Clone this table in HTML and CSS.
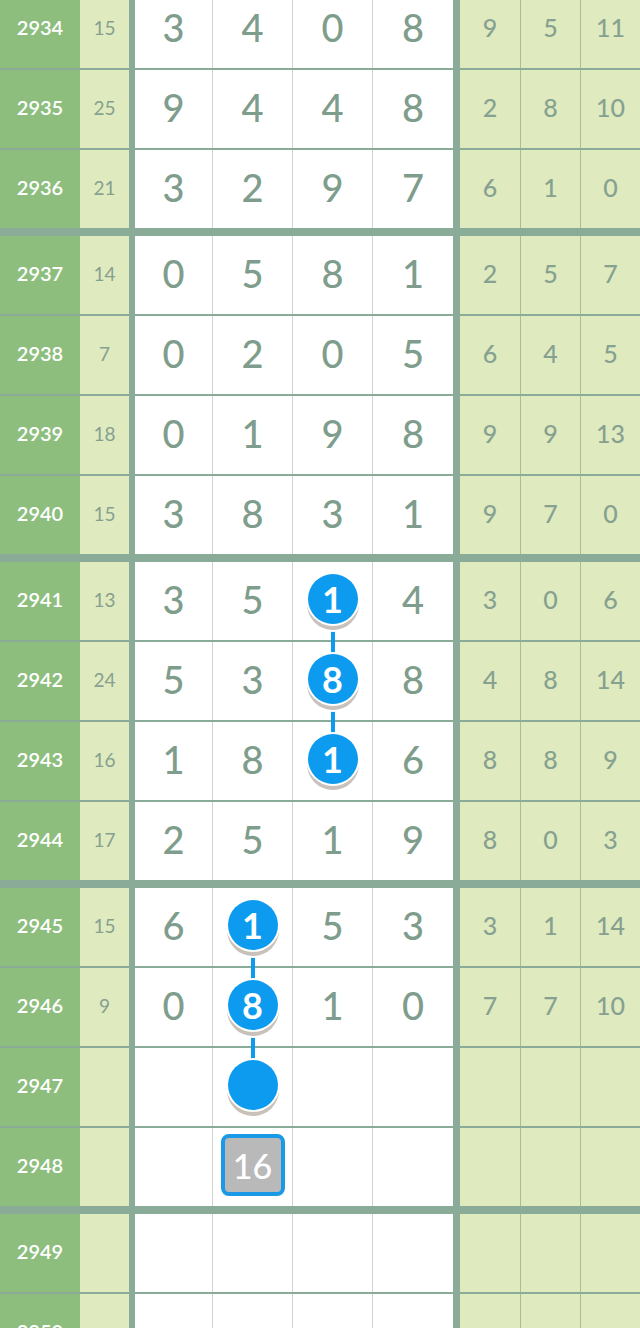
FILE: index.html
```html
<!DOCTYPE html>
<html lang="zh">
<head>
  <meta charset="UTF-8" />
  <meta name="viewport" content="width=device-width, initial-scale=1.0"/>
  <title>走势图</title>
  <link rel="stylesheet" href="styles.css">
</head>
<body>
  <div class="chart">
    <div class="row">
      <div class="no">2934</div><div class="sum">15</div>
      <div class="d first">3</div><div class="d">4</div><div class="d">0</div><div class="d">8</div>
      <div class="r first">9</div><div class="r">5</div><div class="r">11</div>
    </div>
    <div class="row">
      <div class="no">2935</div><div class="sum">25</div>
      <div class="d first">9</div><div class="d">4</div><div class="d">4</div><div class="d">8</div>
      <div class="r first">2</div><div class="r">8</div><div class="r">10</div>
    </div>
    <div class="row end">
      <div class="no">2936</div><div class="sum">21</div>
      <div class="d first">3</div><div class="d">2</div><div class="d">9</div><div class="d">7</div>
      <div class="r first">6</div><div class="r">1</div><div class="r">0</div>
    </div>

    <div class="row">
      <div class="no">2937</div><div class="sum">14</div>
      <div class="d first">0</div><div class="d">5</div><div class="d">8</div><div class="d">1</div>
      <div class="r first">2</div><div class="r">5</div><div class="r">7</div>
    </div>
    <div class="row">
      <div class="no">2938</div><div class="sum">7</div>
      <div class="d first">0</div><div class="d">2</div><div class="d">0</div><div class="d">5</div>
      <div class="r first">6</div><div class="r">4</div><div class="r">5</div>
    </div>
    <div class="row">
      <div class="no">2939</div><div class="sum">18</div>
      <div class="d first">0</div><div class="d">1</div><div class="d">9</div><div class="d">8</div>
      <div class="r first">9</div><div class="r">9</div><div class="r">13</div>
    </div>
    <div class="row end">
      <div class="no">2940</div><div class="sum">15</div>
      <div class="d first">3</div><div class="d">8</div><div class="d">3</div><div class="d">1</div>
      <div class="r first">9</div><div class="r">7</div><div class="r">0</div>
    </div>

    <div class="row">
      <div class="no">2941</div><div class="sum">13</div>
      <div class="d first">3</div><div class="d">5</div><div class="d"><span class="ball">1</span></div><div class="d">4</div>
      <div class="r first">3</div><div class="r">0</div><div class="r">6</div>
    </div>
    <div class="row">
      <div class="no">2942</div><div class="sum">24</div>
      <div class="d first">5</div><div class="d">3</div><div class="d link"><span class="ball">8</span></div><div class="d">8</div>
      <div class="r first">4</div><div class="r">8</div><div class="r">14</div>
    </div>
    <div class="row">
      <div class="no">2943</div><div class="sum">16</div>
      <div class="d first">1</div><div class="d">8</div><div class="d link"><span class="ball">1</span></div><div class="d">6</div>
      <div class="r first">8</div><div class="r">8</div><div class="r">9</div>
    </div>
    <div class="row end">
      <div class="no">2944</div><div class="sum">17</div>
      <div class="d first">2</div><div class="d">5</div><div class="d">1</div><div class="d">9</div>
      <div class="r first">8</div><div class="r">0</div><div class="r">3</div>
    </div>

    <div class="row">
      <div class="no">2945</div><div class="sum">15</div>
      <div class="d first">6</div><div class="d"><span class="ball">1</span></div><div class="d">5</div><div class="d">3</div>
      <div class="r first">3</div><div class="r">1</div><div class="r">14</div>
    </div>
    <div class="row">
      <div class="no">2946</div><div class="sum">9</div>
      <div class="d first">0</div><div class="d link"><span class="ball">8</span></div><div class="d">1</div><div class="d">0</div>
      <div class="r first">7</div><div class="r">7</div><div class="r">10</div>
    </div>
    <div class="row">
      <div class="no">2947</div><div class="sum"></div>
      <div class="d first"></div><div class="d link"><span class="ball"></span></div><div class="d"></div><div class="d"></div>
      <div class="r first"></div><div class="r"></div><div class="r"></div>
    </div>
    <div class="row end">
      <div class="no">2948</div><div class="sum"></div>
      <div class="d first"></div><div class="d"><span class="guess">16</span></div><div class="d"></div><div class="d"></div>
      <div class="r first"></div><div class="r"></div><div class="r"></div>
    </div>

    <div class="row">
      <div class="no">2949</div><div class="sum"></div>
      <div class="d first"></div><div class="d"></div><div class="d"></div><div class="d"></div>
      <div class="r first"></div><div class="r"></div><div class="r"></div>
    </div>
    <div class="row">
      <div class="no">2950</div><div class="sum"></div>
      <div class="d first"></div><div class="d"></div><div class="d"></div><div class="d"></div>
      <div class="r first"></div><div class="r"></div><div class="r"></div>
    </div>
  </div>
</body>
</html>
```

FILE: styles.css
```css
body {
  margin: 0;
  background-color: #ffffff;
  font-family: "Lato", "Noto Sans", sans-serif;
  overflow: hidden;
}
.chart {
  margin-top: -10px;
  width: 640px;
}
.row {
  display: grid;
  grid-template-columns: 80px 49px 83px 80px 80px 81px 67px 60px 60px;
  height: 78px;
  border-bottom: 2px solid #8aab97;
}
.row.end {
  border-bottom-width: 8px;
}
.row > div {
  display: flex;
  justify-content: center;
  align-items: center;
  position: relative;
  box-sizing: border-box;
  padding-bottom: 4px;
}
.no {
  background-color: #8dbe7e;
  color: #ffffff;
  font-size: 20px;
  font-weight: 600;
}
.sum {
  background-color: #dfeabf;
  color: #86a08f;
  font-size: 19px;
}
.d {
  background-color: #ffffff;
  color: #7f9d8d;
  font-size: 38px;
  font-weight: 500;
  border-left: 1px solid #cfd5d1;
}
.d.first {
  border-left: 6px solid #8aab97;
}
.r {
  background-color: #dfeabf;
  color: #86a190;
  font-size: 25px;
  font-weight: 500;
  border-left: 1px solid #a9bb9f;
}
.r.first {
  border-left: 7px solid #8aab97;
}
.ball {
  position: relative;
  z-index: 2;
  width: 50px;
  height: 50px;
  border-radius: 50%;
  background-color: #0d9bef;
  color: #ffffff;
  font-size: 36px;
  font-weight: 700;
  display: flex;
  justify-content: center;
  align-items: center;
  box-shadow: 0 0 0 2px #ffffff, 0 5px 0 1px #c9c1bc, 0 6px 0 2px #ffffff;
}
.link::before {
  content: "";
  position: absolute;
  z-index: 1;
  left: 50%;
  top: -44px;
  width: 4px;
  height: 80px;
  margin-left: -2px;
  background-color: #0d9bef;
}
.guess {
  width: 64px;
  height: 62px;
  box-sizing: border-box;
  border: 4px solid #1a9ae6;
  border-radius: 8px;
  background-color: #b9b9b9;
  color: #ffffff;
  font-size: 34px;
  display: flex;
  justify-content: center;
  align-items: center;
}
```
